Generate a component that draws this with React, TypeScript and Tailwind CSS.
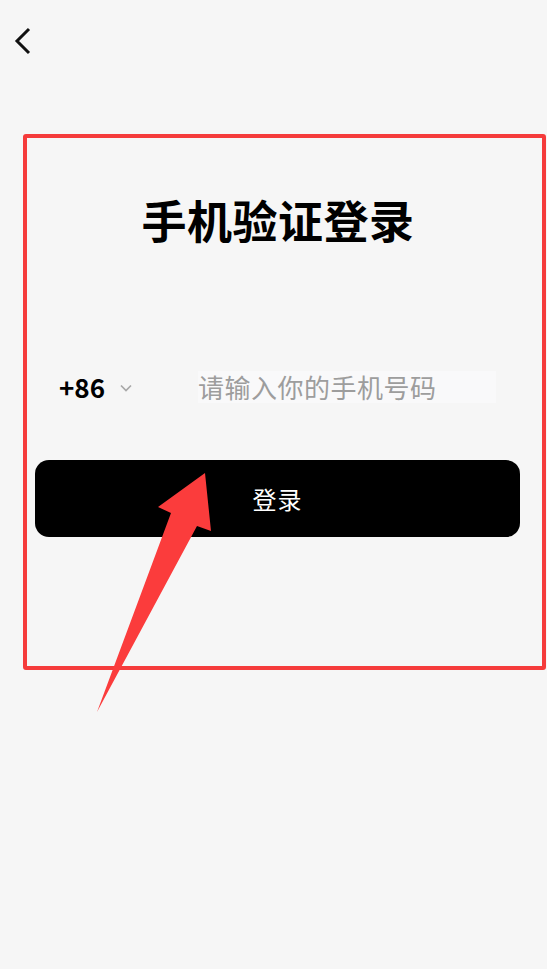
import React from 'react';

const font = { fontFamily: '"Noto Sans CJK SC", "Noto Sans", sans-serif' };

const BackIcon = () => (
  <svg width="18" height="28" viewBox="0 0 18 28" fill="none">
    <path d="M15 2 L3 14 L15 26" stroke="#111" strokeWidth="3" strokeLinecap="butt" strokeLinejoin="miter" />
  </svg>
);

const Chevron = () => (
  <svg width="14" height="10" viewBox="0 0 14 10" fill="none">
    <path d="M2 2.5 L7 7.5 L12 2.5" stroke="#a8a8a8" strokeWidth="1.7" />
  </svg>
);

// red annotation arrow drawn over the screenshot
const Arrow = () => (
  <svg className="absolute left-0 top-0 pointer-events-none" width="547" height="969" viewBox="0 0 547 969">
    <polygon points="97,712 171,513 158,507 205,473 211,531 197,526" fill="#fb3c3c" />
  </svg>
);

export default function App() {
  return (
    <div className="relative w-full min-h-[969px] bg-[#f6f6f6]" style={font}>
      <div className="pl-[14px] pt-[27px] h-[134px]">
        <BackIcon />
      </div>

      <div className="ml-[23px] w-[523px] h-[536px] border-4 border-[#f53b3b] rounded-[3px] flex flex-col">
        <div className="pt-[55px] flex justify-center pr-[13px]">
          <h1 className="text-[45px] leading-[54px] font-bold text-black tracking-[0.5px]">手机验证登录</h1>
        </div>

        <div className="mt-[123px] flex items-center h-[34px]">
          <div className="pl-[32px] flex items-center w-[171px]">
            <span className="text-[26px] font-bold text-black leading-none">+86</span>
            <span className="ml-[14px] mt-[2px]"><Chevron /></span>
          </div>
          <div className="w-[298px] h-[32px] bg-[#f9f9fa] flex items-center">
            <span className="text-[26px] text-[#9d9d9d] leading-none tracking-[0.5px]">请输入你的手机号码</span>
          </div>
        </div>

        <button className="mt-[56px] ml-[8px] w-[485px] h-[77px] bg-black rounded-[14px] flex items-center justify-center">
          <span className="text-white text-[24px] leading-none tracking-[1px]">登录</span>
        </button>
      </div>

      <Arrow />
    </div>
  );
}
